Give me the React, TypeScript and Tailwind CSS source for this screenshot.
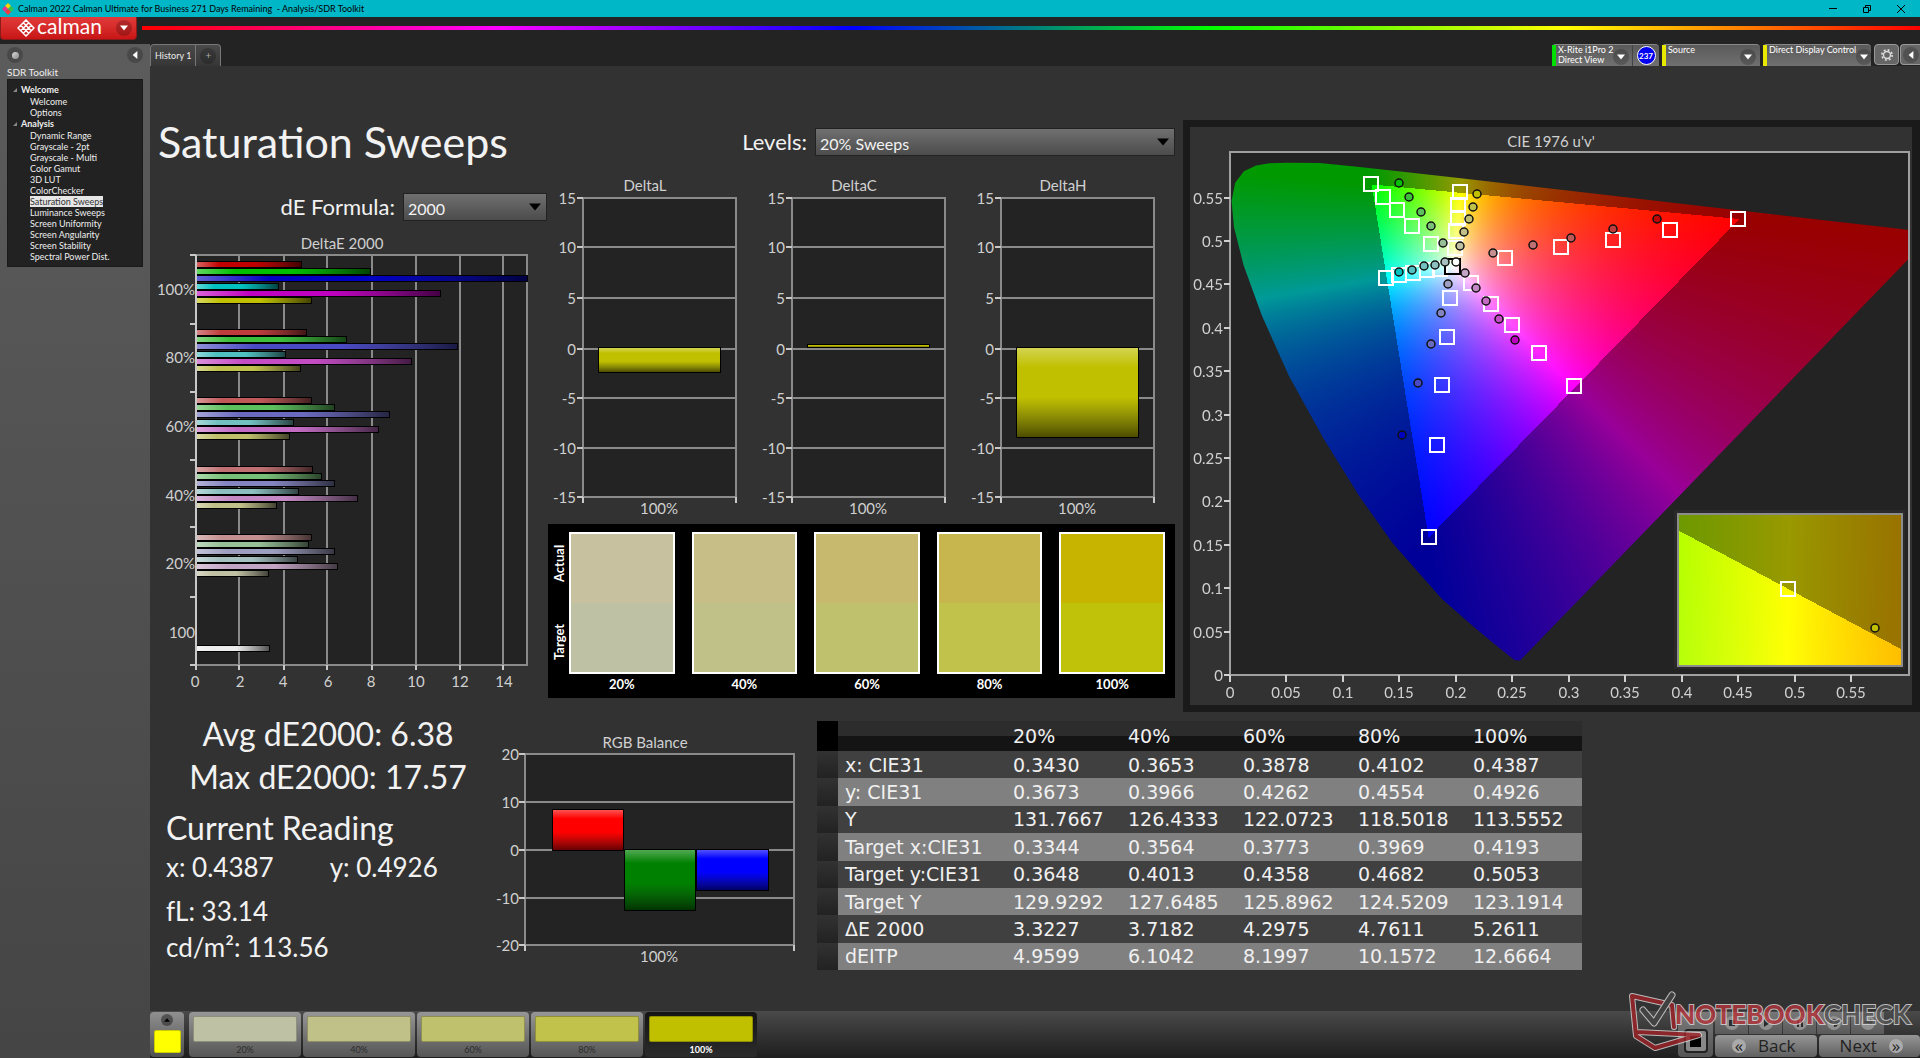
import { useLayoutEffect, useRef } from "react";
import type { ReactNode } from "react";

/* ---------- colour maths for the chromaticity diagram ---------- */

const LOCUS: [number, number][] = [
  [0.2569, 0.0165], [0.2522, 0.0169], [0.2347, 0.035], [0.2161, 0.0549], [0.1877, 0.0871],
  [0.1441, 0.151], [0.1147, 0.2044], [0.0828, 0.2708], [0.0521, 0.3427], [0.0282, 0.4117],
  [0.0119, 0.4698], [0.0035, 0.5131], [0.0014, 0.5432], [0.0046, 0.5638], [0.0123, 0.577],
  [0.0231, 0.5837], [0.0351, 0.5862], [0.0501, 0.5868], [0.0792, 0.5864], [0.1127, 0.5821],
  [0.1531, 0.5766], [0.2026, 0.5694], [0.2623, 0.5604], [0.3315, 0.5501], [0.4035, 0.5393],
  [0.4691, 0.5296], [0.5203, 0.5219], [0.583, 0.5125], [0.6234, 0.5065],
];

function colorAt(u: number, v: number): [number, number, number] {
  const X = (9 * u) / (4 * v);
  const Z = (12 - 3 * u - 20 * v) / (4 * v);
  const lin = [
    3.2406 * X - 1.5372 - 0.4986 * Z,
    -0.9689 * X + 1.8758 + 0.0415 * Z,
    0.0557 * X - 0.204 + 1.057 * Z,
  ];
  const dim = Math.min(...lin) < 0 ? 0.6 : 1;
  const peak = Math.max(...lin);
  const [r, g, b] = lin.map((c) => (255 * dim * Math.max(c, 0)) / peak);
  return [r, g, b];
}

type GamutProps = {
  x: number; y: number; w: number; h: number;
  u0: number; v0: number; su: number; sv: number; clipped?: boolean;
};

function GamutField({ x, y, w, h, u0, v0, su, sv, clipped }: GamutProps) {
  const ref = useRef<HTMLCanvasElement>(null);
  useLayoutEffect(() => {
    const ctx = ref.current?.getContext("2d");
    if (!ctx) return;
    const img = ctx.createImageData(w, h);
    for (let j = 0; j < h; j++) {
      for (let i = 0; i < w; i++) {
        const [r, g, b] = colorAt(u0 + i / su, Math.max(v0 + (h - j) / sv, 0.002));
        const k = 4 * (j * w + i);
        img.data[k] = r;
        img.data[k + 1] = g;
        img.data[k + 2] = b;
        img.data[k + 3] = 255;
      }
    }
    ctx.putImageData(img, 0, 0);
    if (clipped) {
      ctx.globalCompositeOperation = "destination-in";
      ctx.beginPath();
      LOCUS.forEach(([u, v]) => ctx.lineTo((u - u0) * su, h - (v - v0) * sv));
      ctx.closePath();
      ctx.fill();
    }
  }, [w, h, u0, v0, su, sv, clipped]);
  return (
    <foreignObject x={x} y={y} width={w} height={h}>
      <canvas ref={ref} width={w} height={h} className="block" />
    </foreignObject>
  );
}

/* ---------- shared chart parts ---------- */

const AXIS = "#8a8a8a";
const LABEL = "#d0d0d0";
const PLOT = "#232323";

function Defs() {
  return (
    <svg className="absolute h-0 w-0" aria-hidden="true">
      <defs>
        <linearGradient id="shadeX">
          <stop offset="0" stopColor="#fff" stopOpacity="0.38" />
          <stop offset="0.22" stopColor="#fff" stopOpacity="0" />
          <stop offset="0.55" stopColor="#222" stopOpacity="0" />
          <stop offset="1" stopColor="#000" stopOpacity="0.65" />
        </linearGradient>
        <linearGradient id="shadeY" x2="0" y2="1">
          <stop offset="0" stopColor="#fff" stopOpacity="0.32" />
          <stop offset="0.22" stopColor="#fff" stopOpacity="0" />
          <stop offset="0.55" stopColor="#222" stopOpacity="0" />
          <stop offset="1" stopColor="#000" stopOpacity="0.6" />
        </linearGradient>
      </defs>
    </svg>
  );
}

function Label({ x, y, anchor = "middle", children }: { x: number; y: number; anchor?: "start" | "middle" | "end"; children: ReactNode }) {
  return (
    <text x={x} y={y + 5} textAnchor={anchor} fill={LABEL} fontSize={15}>
      {children}
    </text>
  );
}

function Bar({ x, y, w, h, fill, shade }: { x: number; y: number; w: number; h: number; fill: string; shade: "url(#shadeX)" | "url(#shadeY)" }) {
  return (
    <g>
      <rect x={x} y={y} width={w} height={h} fill="#000" />
      <rect x={x + 1} y={y + 1} width={w - 2} height={h - 2} fill={fill} />
      <rect x={x + 1} y={y + 1} width={w - 2} height={h - 2} fill={shade} />
    </g>
  );
}

/* ---------- DeltaE chart ---------- */

const DE_GROUPS = [
  { label: "100%", mid: 290, top: 265, ends: [302, 371, 528, 279, 441, 312], colors: ["#c00000", "#00c000", "#0000c0", "#00c0c0", "#c000c0", "#c0c000"] },
  { label: "80%", mid: 358, top: 333, ends: [307, 347, 458, 286, 412, 301], colors: ["#c03c3c", "#3cc03c", "#4a4ac4", "#50c0c0", "#c44cc4", "#c0c04c"] },
  { label: "60%", mid: 427, top: 401, ends: [312, 335, 390, 294, 379, 290], colors: ["#c05858", "#5cc05c", "#6a6ac0", "#72c0c0", "#c46cc4", "#c0c06c"] },
  { label: "40%", mid: 496, top: 470, ends: [313, 322, 335, 299, 358, 277], colors: ["#c07070", "#78c078", "#8484c0", "#8cc0c0", "#c488c4", "#c0c088"] },
  { label: "20%", mid: 564, top: 538, ends: [312, 309, 335, 298, 338, 269], colors: ["#c49090", "#98c098", "#9e9ec0", "#a6c0c0", "#c4a4c4", "#c0c0a4"] },
];

function DeltaEChart() {
  return (
    <svg viewBox="150 221 398 479" className="block h-auto w-full" role="img" aria-label="DeltaE 2000">
      <Label x={342} y={244}>DeltaE 2000</Label>
      <rect x={196} y={255} width={331} height={410} fill={PLOT} stroke={AXIS} strokeWidth={2} />
      {[239, 284, 327, 372, 416, 460, 503].map((x) => (
        <path key={x} d={`M${x} 255V665`} stroke={AXIS} strokeWidth={2} />
      ))}
      {DE_GROUPS.map((g) =>
        g.ends.map((end, i) => (
          <Bar key={g.label + i} x={196} y={g.top - 4 + Math.round(i * 7.2)} w={end - 196} h={7} fill={g.colors[i]} shade="url(#shadeX)" />
        )),
      )}
      <Bar x={196} y={645} w={74} h={7} fill="#ececec" shade="url(#shadeX)" />
      <path d="M196 255V670M190 255h6M190 324h6M190 392h6M190 460h6M190 527h6M190 597h6M190 665h6" stroke="#c8c8c8" strokeWidth={2} />
      <path d="M239 665v5M284 665v5M327 665v5M372 665v5M416 665v5M460 665v5M503 665v5" stroke="#c8c8c8" strokeWidth={2} />
      {DE_GROUPS.map((g) => (
        <Label key={g.label} x={195} y={g.mid} anchor="end">{g.label}</Label>
      ))}
      <Label x={195} y={633} anchor="end">100</Label>
      {[195, 240, 283, 328, 371, 416, 460, 504].map((x, i) => (
        <Label key={x} x={x} y={682}>{i * 2}</Label>
      ))}
    </svg>
  );
}

/* ---------- DeltaL / DeltaC / DeltaH ---------- */

const DELTAS = [
  { title: "DeltaL", left: 583, y: 347, h: 26 },
  { title: "DeltaC", left: 792, y: 344, h: 4 },
  { title: "DeltaH", left: 1001, y: 347, h: 91 },
];
const DELTA_TICKS: [string, number][] = [["15", 198], ["10", 247], ["5", 298], ["0", 349], ["-5", 398], ["-10", 448], ["-15", 497]];

function DeltaCharts() {
  return (
    <svg viewBox="548 156 634 368" className="block h-auto w-full" role="img" aria-label="DeltaL, DeltaC and DeltaH">
      {DELTAS.map((d) => (
        <g key={d.title}>
          <Label x={d.left + 62} y={186}>{d.title}</Label>
          <rect x={d.left} y={198} width={153} height={299} fill={PLOT} stroke={AXIS} strokeWidth={2} />
          {DELTA_TICKS.map(([t, y]) => (
            <g key={t}>
              <path d={`M${d.left} ${y}h153`} stroke={AXIS} strokeWidth={2} />
              <path d={`M${d.left - 6} ${y}h6`} stroke="#c8c8c8" strokeWidth={2} />
              <Label x={d.left - 7} y={y + 1} anchor="end">{t}</Label>
            </g>
          ))}
          <path d={`M${d.left} 497v6M${d.left + 153} 497v6`} stroke="#c8c8c8" strokeWidth={2} />
          <Bar x={d.left + 15} y={d.y} w={123} h={d.h} fill="#c0c000" shade="url(#shadeY)" />
          <Label x={d.left + 76} y={509}>100%</Label>
        </g>
      ))}
    </svg>
  );
}

/* ---------- RGB balance ---------- */

function RgbBalance() {
  const ticks: [string, number][] = [["20", 754], ["10", 802], ["0", 850], ["-10", 898], ["-20", 945]];
  return (
    <svg viewBox="490 722 327 250" className="block h-auto w-full" role="img" aria-label="RGB Balance">
      <Label x={645} y={743}>RGB Balance</Label>
      <rect x={525} y={754} width={269} height={191} fill={PLOT} stroke={AXIS} strokeWidth={2} />
      {ticks.map(([t, y]) => (
        <g key={t}>
          <path d={`M525 ${y}h269`} stroke={AXIS} strokeWidth={2} />
          <path d={`M519 ${y}h6`} stroke="#c8c8c8" strokeWidth={2} />
          <Label x={519} y={y + 1} anchor="end">{t}</Label>
        </g>
      ))}
      <path d="M525 945v6M794 945v6" stroke="#c8c8c8" strokeWidth={2} />
      <Bar x={552} y={809} w={72} h={42} fill="#ff0000" shade="url(#shadeY)" />
      <Bar x={624} y={849} w={72} h={62} fill="#008000" shade="url(#shadeY)" />
      <Bar x={696} y={849} w={73} h={42} fill="#0000ff" shade="url(#shadeY)" />
      <Label x={659} y={957}>100%</Label>
    </svg>
  );
}

/* ---------- CIE 1976 diagram ---------- */

const TARGETS: [number, number][] = [
  [1371, 184], [1383, 197], [1397, 210], [1412, 226], [1431, 244],
  [1460, 192], [1458, 205], [1458, 218], [1456, 231], [1455, 248],
  [1505, 258], [1561, 247], [1613, 240], [1670, 230], [1738, 219],
  [1386, 278], [1399, 275], [1413, 273], [1427, 270], [1440, 269],
  [1471, 283], [1491, 304], [1512, 325], [1539, 353], [1574, 386],
  [1450, 298], [1447, 337], [1442, 385], [1437, 445], [1429, 537],
];

const READINGS: [number, number, string][] = [
  [1399, 183, "#00c000"], [1409, 197, "#3cc03c"], [1421, 212, "#5cc05c"], [1431, 226, "#78c078"], [1443, 243, "#98c098"],
  [1477, 194, "#c0c000"], [1473, 207, "#c0c04c"], [1469, 219, "#c0c06c"], [1464, 232, "#c0c088"], [1460, 246, "#c0c0a4"],
  [1657, 219, "#c00000"], [1613, 229, "#c03c3c"], [1571, 238, "#c05858"], [1533, 245, "#c07070"], [1493, 253, "#c49090"],
  [1399, 272, "#00c0c0"], [1412, 270, "#50c0c0"], [1424, 266, "#72c0c0"], [1435, 265, "#8cc0c0"], [1445, 262, "#a6c0c0"],
  [1515, 340, "#c000c0"], [1499, 319, "#c44cc4"], [1486, 301, "#c46cc4"], [1476, 288, "#c488c4"], [1465, 273, "#c4a4c4"],
  [1402, 435, "#0000c0"], [1418, 383, "#4a4ac4"], [1431, 344, "#6a6ac0"], [1441, 313, "#8484c0"], [1448, 284, "#9e9ec0"],
  [1456, 262, "#ffffff"],
];

function CieChart() {
  const steps = Array.from({ length: 12 }, (_, i) => i);
  return (
    <svg viewBox="1182 120 738 592" className="block h-auto w-full" role="img" aria-label="CIE 1976 u'v'">
      <rect x={1183} y={120} width={737} height={592} fill="#1a1a1a" />
      <rect x={1190} y={127} width={722} height={578} fill="#323232" />
      <Label x={1551} y={142}>CIE 1976 u'v'</Label>
      <rect x={1230} y={152} width={679} height={523} fill={PLOT} />
      <GamutField x={1230} y={152} w={679} h={523} u0={0} v0={0} su={1129} sv={873} clipped />
      <rect x={1230} y={152} width={679} height={523} fill="none" stroke="#a0a0a0" strokeWidth={2} />
      {steps.map((i) => {
        const t = String(Number((i * 0.05).toFixed(2)));
        const x = Math.round(1230 + i * 56.45);
        const y = Math.round(675 - i * 43.4);
        return (
          <g key={i}>
            <path d={`M${x} 675v7M1224 ${y}h6`} stroke="#d0d0d0" strokeWidth={2} />
            <Label x={x} y={693}>{t}</Label>
            <Label x={1223} y={y + 1} anchor="end">{t}</Label>
          </g>
        );
      })}
      {TARGETS.map(([x, y]) => (
        <rect key={`${x}-${y}`} x={x - 7} y={y - 7} width={14} height={14} fill="none" stroke="#fff" strokeWidth={2} />
      ))}
      <rect x={1445} y={259} width={15} height={15} fill="none" stroke="#000" strokeWidth={2} />
      {READINGS.map(([x, y, fill]) => (
        <circle key={`${x}-${y}`} cx={x} cy={y} r={4} fill={fill} stroke="#111" strokeWidth={1.5} />
      ))}
      <rect x={1674} y={510} width={231} height={159} fill="#2a2a2a" />
      <GamutField x={1678} y={514} w={224} h={152} u0={0.1856} v0={0.54996} su={6000} sv={26300} />
      <rect x={1678} y={514} width={224} height={152} fill="none" stroke="#8c8c8c" strokeWidth={2} />
      <rect x={1781} y={582} width={14} height={14} fill="none" stroke="#fff" strokeWidth={2} />
      <circle cx={1875} cy={628} r={4} fill="#c0c000" stroke="#111" strokeWidth={1.5} />
    </svg>
  );
}

/* ---------- small widgets ---------- */

function Triangle({ dir, className }: { dir: "down" | "left" | "up"; className: string }) {
  const d = { down: "M0 2h10L5 8z", left: "M8 0v10L2 5z", up: "M0 8h10L5 2z" }[dir];
  return (
    <svg viewBox="0 0 10 10" className={className} aria-hidden="true">
      <path d={d} fill="currentColor" />
    </svg>
  );
}

function Dropdown({ id, value, className }: { id: string; value: string; className: string }) {
  return (
    <div className={`relative ${className}`}>
      <select id={id} className="h-7 w-full appearance-none border border-[#222] bg-linear-to-b from-[#707070] to-[#4c4c4c] px-1 pt-1 text-base leading-5 text-[#f2f2f2]">
        <option>{value}</option>
      </select>
      <Triangle dir="down" className="pointer-events-none absolute top-2 right-1.5 size-3 text-black" />
    </div>
  );
}

function RoundIcon({ children, className = "" }: { children: ReactNode; className?: string }) {
  return <span className={`flex size-4 shrink-0 items-center justify-center rounded-full bg-black/20 ${className}`}>{children}</span>;
}

/* ---------- page parts ---------- */

function TitleBar() {
  return (
    <header className="flex h-[17px] items-center bg-[#00b7c7] text-black">
      <svg viewBox="0 0 12 12" className="mx-0.5 size-3" aria-hidden="true">
        <path d="M6 0l3 3-3 3-3-3z" fill="#ffd400" />
        <path d="M3 3l3 3-3 3-3-3z" fill="#e6348c" />
        <path d="M9 3l3 3-3 3-3-3z" fill="#35c24a" />
        <path d="M6 6l3 3-3 3-3-3z" fill="#f03c3c" />
      </svg>
      <span className="ml-0.5 flex-1 text-[9px] leading-4 whitespace-pre">
        {"Calman 2022 Calman Ultimate for Business 271 Days Remaining  - Analysis/SDR Toolkit"}
      </span>
      <div className="flex gap-6 pr-3.5">
        <button aria-label="Minimize" className="flex size-[10px] items-center justify-center">
          <span className="h-px w-2 bg-black" />
        </button>
        <button aria-label="Restore">
          <svg viewBox="0 0 10 10" className="size-[10px]" fill="none" stroke="#000">
            <path d="M1.5 3.5h5v5h-5zM3.5 3.5v-2h5v5h-2" />
          </svg>
        </button>
        <button aria-label="Close">
          <svg viewBox="0 0 10 10" className="size-[10px]" stroke="#000">
            <path d="M1 1l8 8M9 1l-8 8" />
          </svg>
        </button>
      </div>
    </header>
  );
}

function BrandRow() {
  return (
    <div className="flex h-[27px] items-start">
      <button className="flex h-[23px] w-[137px] items-center rounded-b-sm border border-t-0 border-[#8b1a1a] bg-linear-to-b from-[#e23a3a] to-[#c81414] pr-1 pl-4 text-white">
        <svg viewBox="0 0 18 18" className="size-[18px]" fill="none" stroke="#fff" strokeWidth="1.5" aria-hidden="true">
          <path d="M9 1l8 8-8 8-8-8zM6.3 3.7l8 8M3.7 6.3l8 8M11.7 3.7l-8 8M14.3 6.3l-8 8" />
        </svg>
        <span className="ml-0.5 pb-1 text-[21px] leading-5">calman</span>
        <RoundIcon className="ml-auto">
          <Triangle dir="down" className="size-2" />
        </RoundIcon>
      </button>
      <div className="mt-[9px] ml-[5px] h-1 flex-1 bg-[linear-gradient(to_right,#f00,#f0f,#00f,#0f0,#ff0,#f00)]" />
    </div>
  );
}

const TREE = [
  { name: "Welcome", items: ["Welcome", "Options"] },
  {
    name: "Analysis",
    items: ["Dynamic Range", "Grayscale - 2pt", "Grayscale - Multi", "Color Gamut", "3D LUT", "ColorChecker", "Saturation Sweeps", "Luminance Sweeps", "Screen Uniformity", "Screen Angularity", "Screen Stability", "Spectral Power Dist."],
  },
];

function Sidebar() {
  return (
    <aside className="flex w-[150px] shrink-0 flex-col bg-linear-to-b from-[#5c5c5c] to-[#454545] px-[7px] pt-[3px]">
      <div className="flex items-center justify-between">
        <RoundIcon>
          <span className="size-[7px] rounded-full bg-linear-to-br from-[#ddd] to-[#888]" />
        </RoundIcon>
        <button aria-label="Collapse panel">
          <RoundIcon>
            <Triangle dir="left" className="size-2 text-white" />
          </RoundIcon>
        </button>
      </div>
      <h2 className="mt-0.5 text-[10px] leading-3.5 text-[#eee]">SDR Toolkit</h2>
      <nav className="border border-[#1a1a1a] bg-[#222] pt-1 pb-1 text-[9px] leading-[11px] text-[#eee]">
        {TREE.map((group) => (
          <section key={group.name}>
            <h3 className="flex items-center gap-1 pl-[5px] leading-3 font-bold">
              <svg viewBox="0 0 4 4" className="size-1" aria-hidden="true">
                <path d="M4 0v4H0z" fill="#888" />
              </svg>
              {group.name}
            </h3>
            <ul className="pl-[22px]">
              {group.items.map((item) => (
                <li key={item}>
                  <a href="#" className={item === "Saturation Sweeps" ? "bg-[#e6e6e6] text-[#333]" : ""}>
                    {item}
                  </a>
                </li>
              ))}
            </ul>
          </section>
        ))}
      </nav>
    </aside>
  );
}

function Device({ bar, lines, width, children }: { bar: string; lines: string[]; width: string; children?: ReactNode }) {
  return (
    <div className={`flex h-[22px] rounded-t-sm border-t border-[#888] bg-linear-to-b from-[#5a5a5a] to-[#707070] ${width}`}>
      <span className={`w-1 ${bar}`} />
      <button className="flex min-w-0 flex-1 items-start justify-between pl-0.5 text-left text-[9px] leading-2.5 text-white">
        <span className="whitespace-nowrap">
          {lines.map((l) => (
            <span key={l} className="block">{l}</span>
          ))}
        </span>
        <RoundIcon className="mt-1 mr-1">
          <Triangle dir="down" className="size-2" />
        </RoundIcon>
      </button>
      {children}
    </div>
  );
}

function TabRow() {
  return (
    <div className="flex h-[22px] items-start justify-between">
      <div className="flex h-[22px] rounded-t-sm border border-b-0 border-[#777] bg-linear-to-b from-[#4a4a4a] to-[#363636]">
        <button className="px-1 text-[9px] leading-5 text-[#eee]">History 1</button>
        <button aria-label="Add tab" className="flex items-center border-l border-[#777] px-1 text-[10px] text-[#aaa]">
          <RoundIcon>+</RoundIcon>
        </button>
      </div>
      <div className="flex gap-[3px]">
        <Device bar="bg-[#00e000]" width="w-[107px]" lines={["X-Rite i1Pro 2", "Direct View"]}>
          <span className="flex w-[27px] items-center justify-center border-l border-[#444]">
            <span className="flex size-[19px] items-center justify-center rounded-full border border-white bg-[#0000f0] text-[8px] font-bold text-white">237</span>
          </span>
        </Device>
        <Device bar="bg-[#e8e800]" width="w-[98px]" lines={["Source"]} />
        <Device bar="bg-[#e8e800]" width="w-[108px]" lines={["Direct Display Control"]} />
        <div className="flex gap-px">
          <button aria-label="Settings" className="flex h-[21px] w-[25px] items-center justify-center rounded-sm border border-[#999] bg-[#666]">
            <svg viewBox="0 0 12 12" className="size-3.5" fill="none" stroke="#ddd" aria-hidden="true">
              <circle cx="6" cy="6" r="3" strokeWidth="1.2" />
              <circle cx="6" cy="6" r="4.4" strokeWidth="1.4" strokeDasharray="1.7 1.755" />
            </svg>
          </button>
          <button aria-label="Expand" className="flex h-[21px] w-5 items-center justify-center rounded-l-sm border border-r-0 border-[#999] bg-[#666] text-white">
            <RoundIcon>
              <Triangle dir="left" className="size-2" />
            </RoundIcon>
          </button>
        </div>
      </div>
    </div>
  );
}

const LEVELS = [
  { label: "20%", actual: "#c7c1a0", target: "#bfc1a5" },
  { label: "40%", actual: "#c7bd87", target: "#c0c188" },
  { label: "60%", actual: "#c7b96d", target: "#c0c16c" },
  { label: "80%", actual: "#c7b64e", target: "#c0c24c" },
  { label: "100%", actual: "#c7b400", target: "#c0c20a" },
];

function Swatches() {
  return (
    <div className="mr-[7px] flex bg-black pt-2 pr-[10px] text-[13px] font-bold text-white">
      <div className="flex w-[21px] flex-col items-center">
        <span className="flex h-[62px] rotate-180 items-center justify-center leading-4 [writing-mode:vertical-rl]">Actual</span>
        <span className="flex h-24 rotate-180 items-center justify-center leading-4 [writing-mode:vertical-rl]">Target</span>
      </div>
      <div className="grid flex-1 grid-cols-5 gap-[17px]">
        {LEVELS.map((l) => (
          <figure key={l.label}>
            <div className="border-2 border-white">
              <div className="h-[69px]" style={{ background: l.actual }} />
              <div className="h-[69px]" style={{ background: l.target }} />
            </div>
            <figcaption className="pt-px pb-[5px] text-center leading-[18px]">{l.label}</figcaption>
          </figure>
        ))}
      </div>
    </div>
  );
}

const ROWS = [
  ["x: CIE31", "0.3430", "0.3653", "0.3878", "0.4102", "0.4387"],
  ["y: CIE31", "0.3673", "0.3966", "0.4262", "0.4554", "0.4926"],
  ["Y", "131.7667", "126.4333", "122.0723", "118.5018", "113.5552"],
  ["Target x:CIE31", "0.3344", "0.3564", "0.3773", "0.3969", "0.4193"],
  ["Target y:CIE31", "0.3648", "0.4013", "0.4358", "0.4682", "0.5053"],
  ["Target Y", "129.9292", "127.6485", "125.8962", "124.5209", "123.1914"],
  ["ΔE 2000", "3.3227", "3.7182", "4.2975", "4.7611", "5.2611"],
  ["dEITP", "4.9599", "6.1042", "8.1997", "10.1572", "12.6664"],
];

function ResultsTable() {
  return (
    <table className="h-[249px] w-full table-fixed border-collapse text-left font-['DejaVu_Sans'] text-[19px] leading-6 text-[#f0f0f0]">
      <colgroup>
        <col className="w-[21px]" />
        <col className="w-[169px]" />
        <col span={5} />
      </colgroup>
      <thead>
        <tr className="h-[30px] bg-linear-to-b from-[#2c2c2c] from-50% to-[#141414] to-50%">
          <td className="bg-black" />
          <td />
          {LEVELS.map((l) => (
            <th key={l.label} scope="col" className="pl-1.5 font-normal">{l.label}</th>
          ))}
        </tr>
      </thead>
      <tbody>
        {ROWS.map(([name, ...cells]) => (
          <tr key={name} className="bg-[#404040] even:bg-[#808080]">
            <td className="bg-linear-to-b from-[#323232] to-[#222]" />
            <th scope="row" className="pl-[7px] font-normal whitespace-nowrap">{name}</th>
            {cells.map((c, i) => (
              <td key={i} className="pl-1.5">{c}</td>
            ))}
          </tr>
        ))}
      </tbody>
    </table>
  );
}

function Watermark() {
  return (
    <svg viewBox="0 0 294 60" className="pointer-events-none absolute right-0 bottom-[7px] h-[60px] w-[294px] opacity-80" role="img" aria-label="Notebookcheck">
      <g fill="none" strokeLinejoin="round" strokeLinecap="round">
        <path d="M6 5l40 9 2 22M6 5l4 40 19 12 44-13-62-3" stroke="#ddd" strokeWidth="6" />
        <path d="M6 5l40 9 2 22M6 5l4 40 19 12 44-13-62-3" stroke="#a02328" strokeWidth="4" />
        <path d="M17 19l11 13L46 4" stroke="#ddd" strokeWidth="7" />
        <path d="M17 19l11 13L46 4" stroke="#444" strokeWidth="5" />
      </g>
      <text x="49" y="33" fontSize="26" fontWeight="900" stroke="#ddd" strokeWidth="2" paintOrder="stroke">
        <tspan fill="#b4343a">NOTEBOOK</tspan>
        <tspan fill="#555" fontWeight="700">CHECK</tspan>
      </text>
    </svg>
  );
}

const TRANSPORT = [
  { name: "Stop", d: "M4 4h6v6H4z" },
  { name: "Play", d: "M5 3l6 4-6 4z" },
  { name: "Pause", d: "M4 3h2v8H4zM8 3h2v8H8z" },
  { name: "Refresh", d: "M3 7a4 4 0 1 1 4 4v-2a2 2 0 1 0-2-2z" },
  { name: "Loop", d: "M3 5h6V3l3 3-3 3V7H3z" },
];

function Footer() {
  return (
    <footer className="relative flex h-[47px] items-end justify-between bg-linear-to-b from-[#4a4a4a] to-[#1e1e1e]">
      <div className="flex h-full items-stretch gap-0.5 pt-px pb-px">
        <button aria-label="Current pattern" className="mr-[3px] flex w-[34px] flex-col items-center justify-between rounded-sm bg-linear-to-b from-[#909090] to-[#505050] pt-0.5 pb-1">
          <span className="flex size-3 items-center justify-center rounded-full bg-black/40">
            <Triangle dir="up" className="size-1.5 text-black" />
          </span>
          <span className="h-[23px] w-[27px] rounded-xs border border-[#cc0] bg-[#ff0]" />
        </button>
        {LEVELS.map((l, i) => (
          <button
            key={l.label}
            className={`flex w-28 flex-col rounded-sm px-1 pt-1 text-[9px] leading-3.5 ${
              i === 4 ? "bg-linear-to-b from-[#141414] to-[#2c2c2c] font-bold text-white" : "bg-linear-to-b from-[#969696] to-[#565656] text-[#2c2c2c]"
            }`}
          >
            <span className="h-[27px] w-full rounded-xs border border-black/25" style={{ background: ["#bfc1a5", "#c0c188", "#c0c16c", "#c0c24c", "#c0c000"][i] }} />
            <span className="w-full pt-px text-center">{l.label}</span>
          </button>
        ))}
      </div>
      <div className="flex h-full gap-0.5 pt-px pb-px">
        <button aria-label="Stop reading" className="flex w-[35px] items-end justify-center rounded-sm bg-linear-to-b from-[#7a7a7a] to-[#555] pb-1">
          <span className="flex size-6 items-center justify-center rounded-sm border-2 border-[#222] bg-[#888]">
            <span className="size-[11px] bg-black" />
          </span>
        </button>
        <div className="flex w-[205px] flex-col gap-px">
          <div className="flex h-[22px] gap-px">
            {TRANSPORT.map((t) => (
              <button key={t.name} aria-label={t.name} className="flex w-[33px] items-center justify-center bg-linear-to-b from-[#777] to-[#5a5a5a]">
                <svg viewBox="0 0 14 14" className="size-3.5" aria-hidden="true">
                  <circle cx="7" cy="7" r="7" fill="#909090" />
                  <path d={t.d} fill="#2a2a2a" />
                </svg>
              </button>
            ))}
          </div>
          <div className="grid flex-1 grid-cols-2 gap-0.5 font-['Open_Sans'] text-[17px] leading-5 text-[#222]">
            <button className="flex items-center justify-center gap-3 rounded-sm bg-linear-to-b from-[#969696] to-[#606060] pr-1">
              <span className="flex size-3.5 items-center justify-center rounded-full bg-[#aaa] leading-3">«</span>
              Back
            </button>
            <button className="flex items-center justify-center gap-3 rounded-sm bg-linear-to-b from-[#969696] to-[#606060] pl-1">
              Next
              <span className="flex size-3.5 items-center justify-center rounded-full bg-[#aaa] leading-3">»</span>
            </button>
          </div>
        </div>
      </div>
      <Watermark />
    </footer>
  );
}

export default function App() {
  return (
    <div className="relative flex min-h-screen flex-col bg-[#232323] font-['Lato',sans-serif]">
      <Defs />
      <TitleBar />
      <BrandRow />
      <div className="flex flex-1">
        <Sidebar />
        <div className="flex min-w-0 flex-1 flex-col">
          <TabRow />
          <main className="flex-1 bg-[#323232] text-[#f2f2f2]">
            <div className="grid grid-cols-[398fr_634fr_738fr]">
              <section className="pt-12">
                <h1 className="pl-2 text-[43px] leading-[56px] whitespace-nowrap">Saturation Sweeps</h1>
                <div className="mt-[23px] mr-px flex items-center justify-end gap-2">
                  <label htmlFor="formula" className="text-[22px] leading-7">dE Formula:</label>
                  <Dropdown id="formula" value="2000" className="w-36" />
                </div>
                <DeltaEChart />
              </section>
              <section className="pt-[62px]">
                <div className="mr-[7px] flex items-center justify-end gap-2">
                  <label htmlFor="levels" className="text-[22px] leading-7">Levels:</label>
                  <Dropdown id="levels" value="20% Sweeps" className="w-[360px]" />
                </div>
                <DeltaCharts />
                <Swatches />
              </section>
              <section className="pt-[54px]">
                <CieChart />
              </section>
            </div>
            <div className="grid grid-cols-[340fr_327fr_765fr_338fr]">
              <section className="pl-4 text-[26px] leading-9">
                <div className="text-center text-[32px] leading-[43px]">
                  <p>Avg dE2000: 6.38</p>
                  <p>Max dE2000: 17.57</p>
                </div>
                <h2 className="mt-2 text-[32px] leading-[43px]">Current Reading</h2>
                <div className="flex gap-14">
                  <p>x: 0.4387</p>
                  <p>y: 0.4926</p>
                </div>
                <p className="mt-2">fL: 33.14</p>
                <p>cd/m²: 113.56</p>
              </section>
              <section className="pt-2.5">
                <RgbBalance />
              </section>
              <section className="pt-[9px]">
                <ResultsTable />
              </section>
            </div>
          </main>
          <Footer />
        </div>
      </div>
    </div>
  );
}
